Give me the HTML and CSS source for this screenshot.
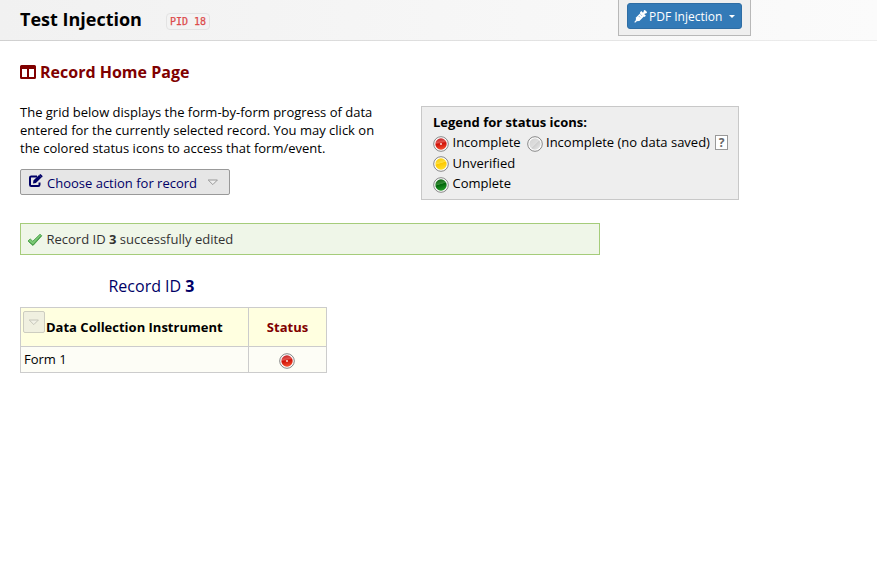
FILE: index.html
```html
<!DOCTYPE html>
<html lang="en">
<head>
<meta charset="utf-8">
<title>Test Injection</title>
<link rel="stylesheet" href="styles.css">
</head>
<body>
<svg class="defs" width="0" height="0" aria-hidden="true">
  <defs>
    <linearGradient id="red" x1="0" y1="0" x2=".2" y2="1"><stop offset="0" stop-color="#b9161c"/><stop offset=".4" stop-color="#e2534c"/><stop offset=".55" stop-color="#cf1208"/><stop offset="1" stop-color="#f04a2c"/></linearGradient>
    <linearGradient id="gray" x1="0" y1="0" x2="1" y2="1"><stop offset="0" stop-color="#d2d2d2"/><stop offset=".5" stop-color="#dedede"/><stop offset=".55" stop-color="#cfcfcf"/><stop offset="1" stop-color="#ededed"/></linearGradient>
    <linearGradient id="yellow" x1="0" y1="0" x2=".3" y2="1"><stop offset="0" stop-color="#f2c500"/><stop offset=".5" stop-color="#ffdf3c"/><stop offset=".55" stop-color="#fcc800"/><stop offset="1" stop-color="#ffdc28"/></linearGradient>
    <linearGradient id="green" x1="0" y1="0" x2=".3" y2="1"><stop offset="0" stop-color="#075c0a"/><stop offset=".5" stop-color="#348c36"/><stop offset=".55" stop-color="#00660a"/><stop offset="1" stop-color="#229626"/></linearGradient>
  </defs>
</svg>
<header class="header">
  <h1 class="project">Test Injection</h1>
  <code class="pid">PID 18</code>
  <div class="module">
    <button class="module-btn">
      <svg class="syringe" width="13" height="13" viewBox="0 0 13 13"><path d="M.7 12.300l2-2" stroke="#fff" stroke-width="1.200"/><path d="M1.700 11.300L2 7.600 7 2.600 10.400 6 5.400 11z" fill="#fff"/><path d="M6.600 1.800l4.600 4.600M9 4l2.300-2.300M10 .5l2.500 2.500" stroke="#fff" stroke-width="2"/><path d="M4.800 6.100l1.300 1.300M6.500 4.400l1.300 1.300" stroke="#337ab7" stroke-width=".6"/></svg>
      <span>PDF Injection</span><i class="caret"></i>
    </button>
  </div>
</header>
<main class="main">
  <h2 class="title"><svg width="16" height="14" viewBox="0 0 16 14"><path fill="#800000" fill-rule="evenodd" d="M1.500 0h13A1.500 1.500 0 0 1 16 1.500v11a1.500 1.500 0 0 1-1.500 1.500h-13A1.500 1.500 0 0 1 0 12.500v-11A1.500 1.500 0 0 1 1.500 0zM2 4v8h5V4zM9 4v8h5V4z"/></svg><span>Record Home Page</span></h2>
  <div class="top">
    <div class="intro">
      <p>The grid below displays the form-by-form progress of data<br>entered for the currently selected record. You may click on<br>the colored status icons to access that form/event.</p>
      <button class="action">
        <svg width="16" height="14" viewBox="0 0 16 14"><path d="M9 2.500H3.200Q2 2.500 2 3.700v7.100Q2 12 3.200 12h7.100q1.200 0 1.200-1.200V8.500" fill="none" stroke="#000066" stroke-width="2"/><path d="M5 9.500l.4-2.900L11 1l2.500 2.500-5.600 5.600zM11.700.4q.6-.7 1.300 0l1.300 1.300q.6.600 0 1.200l-.6.500L11.200.9z" fill="#000066"/></svg>
        <span>Choose action for record</span>
        <svg class="tri" width="12" height="7" viewBox="0 0 12 7"><path d="M1.200 1h9.200L5.800 5.600z" fill="#eee" stroke="#999"/></svg>
      </button>
    </div>
    <section class="legend">
      <b class="legend-title">Legend for status icons:</b>
      <div class="row"><svg class="dot" viewBox="0 0 16 16"><circle cx="8" cy="8" r="7.300" fill="#fff" stroke="#858585"/><circle cx="8" cy="8" r="5.700" fill="url(#red)"/><circle cx="8" cy="8" r="1.100" fill="#fbd0cc"/></svg><span class="w1">Incomplete</span><svg class="dot second" viewBox="0 0 16 16"><circle cx="8" cy="8" r="7.300" fill="#fff" stroke="#858585"/><circle cx="8" cy="8" r="5.700" fill="url(#gray)"/></svg><span class="w2">Incomplete (no data saved)</span><span class="help">?</span></div>
      <div class="row mid"><svg class="dot" viewBox="0 0 16 16"><circle cx="8" cy="8" r="7.300" fill="#fff" stroke="#858585"/><circle cx="8" cy="8" r="5.700" fill="url(#yellow)"/></svg><span>Unverified</span></div>
      <div class="row"><svg class="dot" viewBox="0 0 16 16"><circle cx="8" cy="8" r="7.300" fill="#fff" stroke="#858585"/><circle cx="8" cy="8" r="5.700" fill="url(#green)"/></svg><span>Complete</span></div>
    </section>
  </div>
  <div class="success"><svg width="16" height="14" viewBox="0 0 16 14"><path d="M1 8l2.200-2 2.600 2.300L13 1.300l1.800 1.500L6 12.500z" fill="#7cca76" stroke="#47a047" stroke-width=".9" stroke-linejoin="round"/><path d="M2 8.800l4 3.200 7.800-8.800" fill="none" stroke="#4a9b4b" stroke-width="1"/></svg><span>Record ID <b>3</b> successfully edited</span></div>
  <div class="record">Record ID <b>3</b></div>
  <table class="grid">
    <tr><th class="name"><div class="head"><span class="mini"><svg width="12" height="7" viewBox="0 0 12 7"><path d="M1.200 1h9.200L5.800 5.600z" fill="#f1f1e6" stroke="#c6c6ba"/></svg></span><span>Data Collection Instrument</span></div></th><th class="status">Status</th></tr>
    <tr><td class="form">Form 1</td><td class="icon"><svg class="dot" viewBox="0 0 16 16"><circle cx="8" cy="8" r="7.300" fill="#fff" stroke="#858585"/><circle cx="8" cy="8" r="5.700" fill="url(#red)"/><circle cx="8" cy="8" r="1.100" fill="#fbd0cc"/></svg></td></tr>
  </table>
</main>
</body>
</html>
```
FILE: styles.css
```css
* { box-sizing: border-box; }
body { margin: 0; background: #fff; color: #000; font: 13px/18px "Open Sans", sans-serif; overflow: hidden; }
svg { display: block; flex: none; }
.defs { position: absolute; }
h1, h2, p { margin: 0; }
button { font: inherit; }
span, h1 { white-space: nowrap; }
.header { display: flex; align-items: flex-start; height: 41px; padding-left: 20px; border-bottom: 1px solid #d8d8d8; border-image: linear-gradient(90deg, #d0d0d0, #eee) 1; background: linear-gradient(90deg, #f1f1f1, #fbfbfb); }
.project { width: 146px; margin-top: 7px; font-size: 18px; line-height: 25px; font-weight: 700; }
.pid { width: 44px; height: 17px; margin-top: 13px; border: 1px solid #e3e3e3; border-radius: 4px; background: #f3f3f3; color: #dc4b4b; font: 10px/16px "DejaVu Sans Mono", monospace; -webkit-text-stroke: .25px #dc4b4b; text-align: center; }
.module { width: 133px; height: 36px; margin-left: 408px; padding: 3px 8px; border: 1px solid #b8b8b8; border-top: 0; background: #efefef; }
.module-btn { display: flex; align-items: center; width: 115px; height: 26px; padding: 0 6px; border: 1px solid #2e6da4; border-radius: 3px; background: #337ab7; color: #fff; font-size: 12px; }
.module-btn span { flex: none; width: 80px; margin: 2px 0 0 2px; text-align: left; }
.caret { border: 3px solid transparent; border-top-color: #fff; border-bottom: 0; }
.main { padding: 20px 0 0 20px; }
.title { display: flex; align-items: center; gap: 4px; height: 22px; color: #800000; font-size: 16px; line-height: 22px; }
.top { display: flex; height: 140px; }
.intro { width: 401px; padding-top: 20px; }
.action { display: flex; align-items: center; width: 210px; height: 26px; margin-top: 12px; padding: 0 7px; border: 1px solid #999; border-radius: 2px; background: #e6e6e6; color: #000066; }
.action span { width: 150px; margin: 2px 10px 0 3px; text-align: left; }
.action svg:first-child { margin-top: -2px; }
.legend { width: 318px; height: 94px; margin-top: 23px; padding: 6px 0 0 11px; border: 1px solid #c8c8c8; background: #eee; }
.legend-title { display: block; height: 19px; }
.row { display: flex; height: 20.500px; }
.dot { width: 16px; height: 16px; }
.row .dot { margin: 4px 3.500px 0 0; }
.row .second { margin-right: 3px; }
.mid .dot { margin-top: 3px; }
.row span { line-height: 20px; }
.w1 { width: 74.500px; }
.w2 { width: 169px; }
.row .help { width: 13px; height: 15px; margin-top: 3px; border: 1px solid #999; background: #fff; color: #666; font-weight: 700; font-size: 12px; line-height: 14px; text-align: center; }
.success { display: flex; align-items: center; width: 580px; height: 32px; padding-left: 6px; border: 1px solid #a5cc7a; background: #eff6e8; color: #333; gap: 3.500px; }
.success svg { margin-top: 2px; }
.record { width: 263px; padding-top: 20px; font-size: 16px; line-height: 22px; height: 52px; text-align: center; color: #000066; }
.grid { width: 307px; border-collapse: collapse; table-layout: fixed; }
.grid th, .grid td { border: 1px solid #ccc; padding: 0; }
.grid th { height: 39px; background: #ffffe0; }
.grid td { height: 26px; background: #fdfdf6; }
.grid .form { padding: 0 0 2px 3px; }
.grid .name { width: 228px; }
.head { display: flex; align-items: flex-start; height: 38px; padding: 3px 0 0 2px; }
.head > span:last-child { margin: 7px 0 0 1px; }
.mini { display: flex; align-items: center; justify-content: center; width: 22px; height: 22px; border: 1px solid #cdcdc0; border-radius: 2px; background: #f0f0e0; }
.grid .status { color: #800000; }
.grid .icon { padding: 2px 2px 0 0; }
.icon .dot { margin: 0 auto; }
```
